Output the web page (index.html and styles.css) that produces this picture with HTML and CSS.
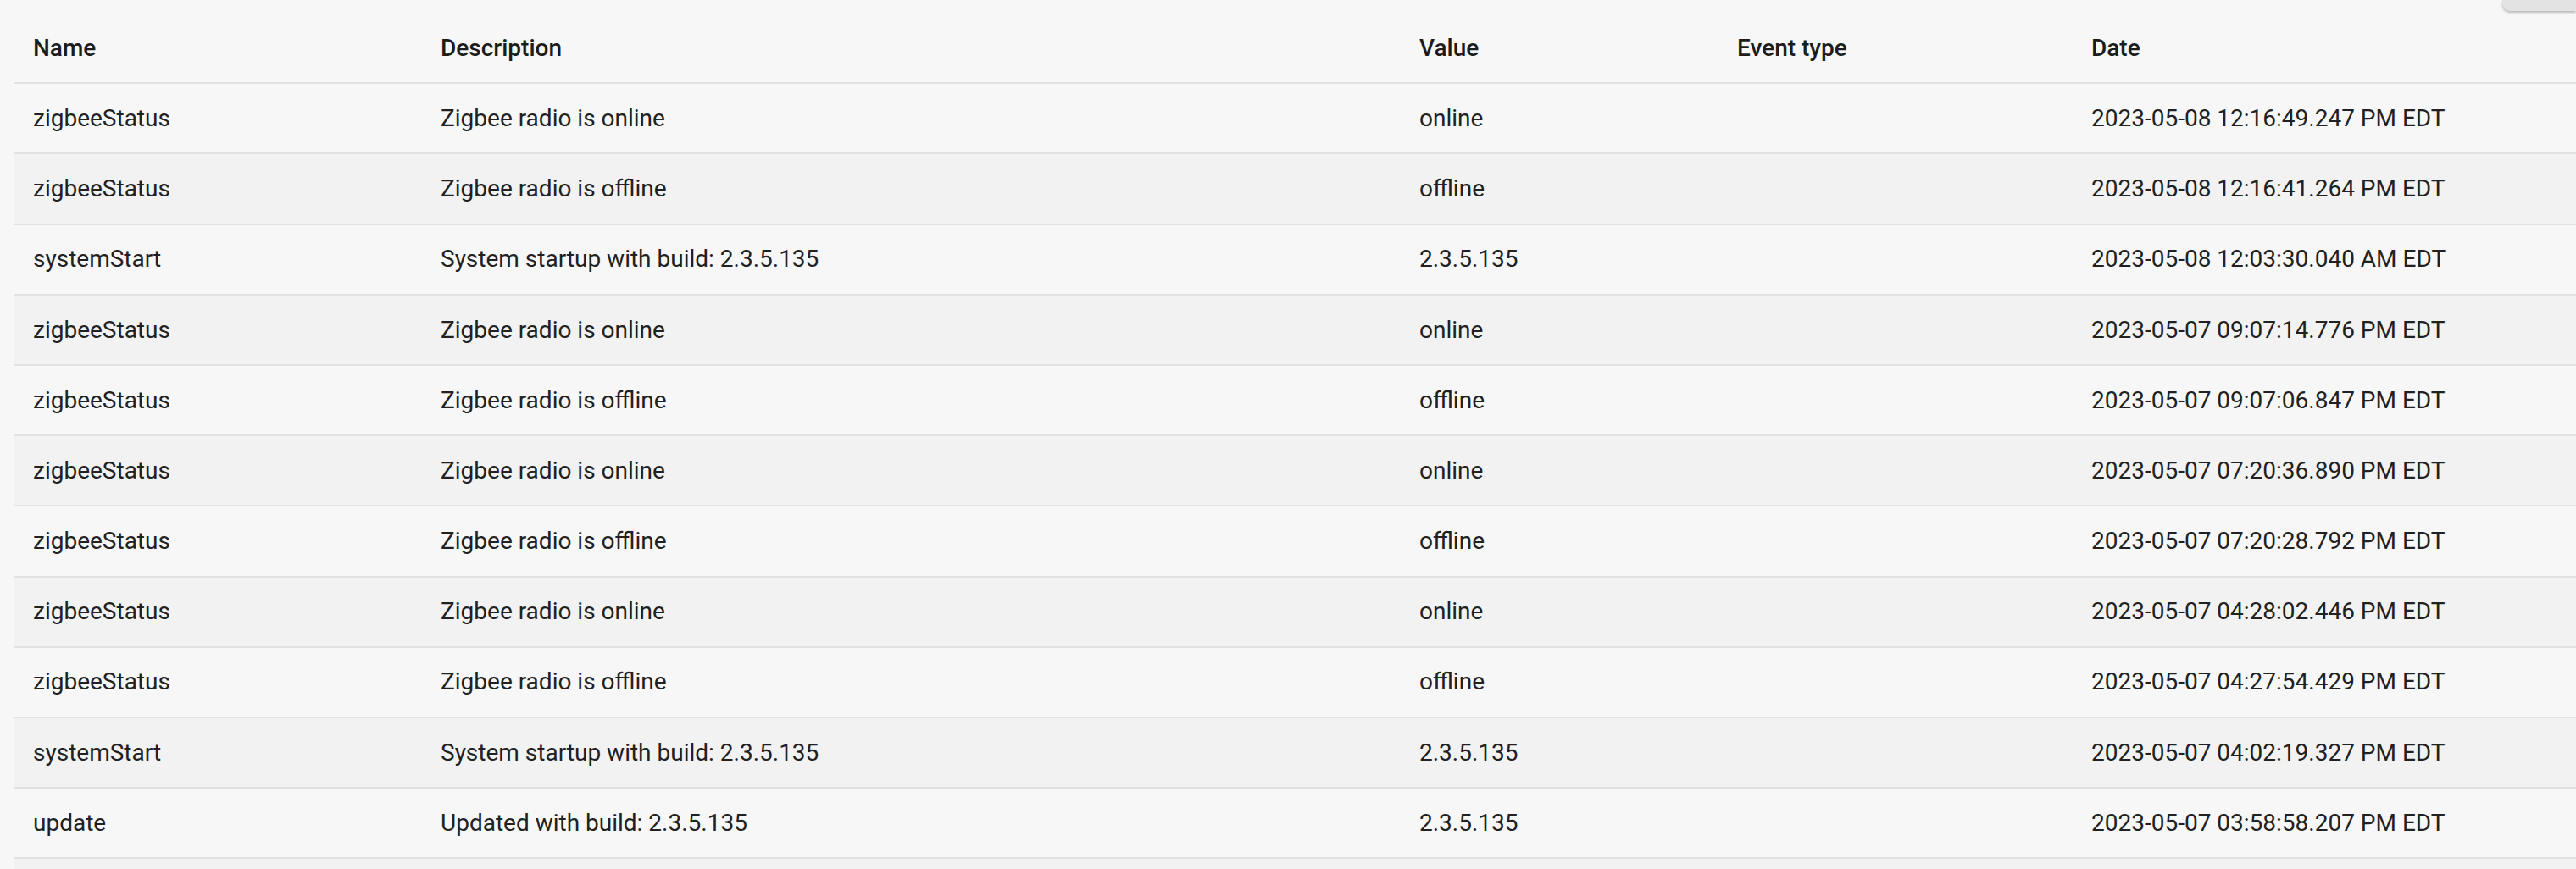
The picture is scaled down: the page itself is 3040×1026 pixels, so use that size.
FILE: index.html
```html
<!DOCTYPE html>
<html lang="en">
<head>
<meta charset="utf-8">
<title>Events</title>
<link rel="stylesheet" href="styles.css">
</head>
<body>
<div class="topbar"><div class="corner-btn"></div></div>
<div class="table">
  <div class="row head">
    <div class="cell">Name</div>
    <div class="cell">Description</div>
    <div class="cell">Value</div>
    <div class="cell">Event type</div>
    <div class="cell">Date</div>
  </div>
  <div class="row">
    <div class="cell">zigbeeStatus</div><div class="cell">Zigbee radio is online</div><div class="cell">online</div><div class="cell"></div><div class="cell">2023-05-08 12:16:49.247 PM EDT</div>
  </div>
  <div class="row">
    <div class="cell">zigbeeStatus</div><div class="cell">Zigbee radio is offline</div><div class="cell">offline</div><div class="cell"></div><div class="cell">2023-05-08 12:16:41.264 PM EDT</div>
  </div>
  <div class="row">
    <div class="cell">systemStart</div><div class="cell">System startup with build: 2.3.5.135</div><div class="cell">2.3.5.135</div><div class="cell"></div><div class="cell">2023-05-08 12:03:30.040 AM EDT</div>
  </div>
  <div class="row">
    <div class="cell">zigbeeStatus</div><div class="cell">Zigbee radio is online</div><div class="cell">online</div><div class="cell"></div><div class="cell">2023-05-07 09:07:14.776 PM EDT</div>
  </div>
  <div class="row">
    <div class="cell">zigbeeStatus</div><div class="cell">Zigbee radio is offline</div><div class="cell">offline</div><div class="cell"></div><div class="cell">2023-05-07 09:07:06.847 PM EDT</div>
  </div>
  <div class="row">
    <div class="cell">zigbeeStatus</div><div class="cell">Zigbee radio is online</div><div class="cell">online</div><div class="cell"></div><div class="cell">2023-05-07 07:20:36.890 PM EDT</div>
  </div>
  <div class="row">
    <div class="cell">zigbeeStatus</div><div class="cell">Zigbee radio is offline</div><div class="cell">offline</div><div class="cell"></div><div class="cell">2023-05-07 07:20:28.792 PM EDT</div>
  </div>
  <div class="row">
    <div class="cell">zigbeeStatus</div><div class="cell">Zigbee radio is online</div><div class="cell">online</div><div class="cell"></div><div class="cell">2023-05-07 04:28:02.446 PM EDT</div>
  </div>
  <div class="row">
    <div class="cell">zigbeeStatus</div><div class="cell">Zigbee radio is offline</div><div class="cell">offline</div><div class="cell"></div><div class="cell">2023-05-07 04:27:54.429 PM EDT</div>
  </div>
  <div class="row">
    <div class="cell">systemStart</div><div class="cell">System startup with build: 2.3.5.135</div><div class="cell">2.3.5.135</div><div class="cell"></div><div class="cell">2023-05-07 04:02:19.327 PM EDT</div>
  </div>
  <div class="row">
    <div class="cell">update</div><div class="cell">Updated with build: 2.3.5.135</div><div class="cell">2.3.5.135</div><div class="cell"></div><div class="cell">2023-05-07 03:58:58.207 PM EDT</div>
  </div>
  <div class="row">
    <div class="cell"></div><div class="cell"></div><div class="cell"></div><div class="cell"></div><div class="cell"></div>
  </div>
</div>
</body>
</html>
```
FILE: styles.css
```css
html, body {
  margin: 0;
  padding: 0;
  background: #f7f7f7;
  overflow: hidden;
}
body {
  font-family: Roboto, "Liberation Sans", sans-serif;
  font-size: 28px;
  color: #212121;
}
.topbar {
  height: 16px;
  display: flex;
  justify-content: flex-end;
  align-items: flex-start;
}
.corner-btn {
  width: 87px;
  height: 13px;
  background: #e3e3e3;
  border-bottom-left-radius: 9px;
  box-shadow: 0 2px 3px rgba(0, 0, 0, 0.25);
}
.table {
  margin-left: 17px;
}
.row {
  display: grid;
  grid-template-columns: 481px 1155px 375px 418px 1fr;
  height: 81.2px;
  border-bottom: 2px solid #e2e2e2;
  align-items: center;
}
.row:nth-child(odd):not(.head) {
  background: #f2f2f2;
}
.cell {
  padding-left: 22px;
  white-space: nowrap;
  line-height: 1.2;
}
.head .cell {
  font-weight: 500;
  color: #1c1c1c;
}
```
